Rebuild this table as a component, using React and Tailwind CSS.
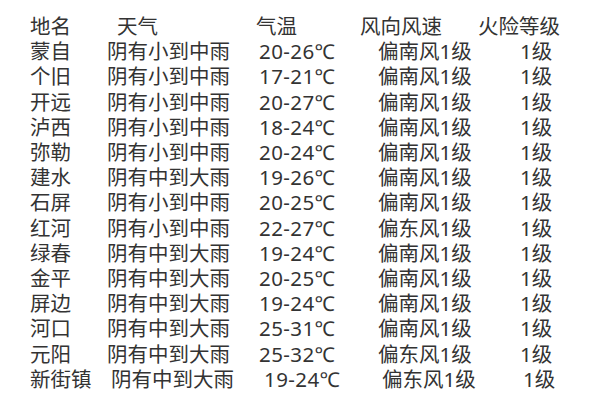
import React from 'react';

const rows = [
  ['蒙自', '阴有小到中雨', '20-26℃', '偏南风1级', '1级'],
  ['个旧', '阴有小到中雨', '17-21℃', '偏南风1级', '1级'],
  ['开远', '阴有小到中雨', '20-27℃', '偏南风1级', '1级'],
  ['泸西', '阴有小到中雨', '18-24℃', '偏南风1级', '1级'],
  ['弥勒', '阴有小到中雨', '20-24℃', '偏南风1级', '1级'],
  ['建水', '阴有中到大雨', '19-26℃', '偏南风1级', '1级'],
  ['石屏', '阴有小到中雨', '20-25℃', '偏南风1级', '1级'],
  ['红河', '阴有小到中雨', '22-27℃', '偏东风1级', '1级'],
  ['绿春', '阴有中到大雨', '19-24℃', '偏南风1级', '1级'],
  ['金平', '阴有中到大雨', '20-25℃', '偏南风1级', '1级'],
  ['屏边', '阴有中到大雨', '19-24℃', '偏南风1级', '1级'],
  ['河口', '阴有中到大雨', '25-31℃', '偏南风1级', '1级'],
  ['元阳', '阴有中到大雨', '25-32℃', '偏东风1级', '1级'],
];

const Row = ({ r }) => (
  <div className="flex">
    <div className="w-[77px]">{r[0]}</div>
    <div className="w-[152px]">{r[1]}</div>
    <div className="w-[119px] tracking-[0.4px]">{r[2]}</div>
    <div className="w-[142px]">{r[3]}</div>
    <div>{r[4]}</div>
  </div>
);

export default function App() {
  return (
    <div
      className="w-[600px] h-[410px] bg-white text-[#333] text-[20.5px] leading-[25.2px] pt-[14px] pl-[30px]"
      style={{ fontFamily: '"Noto Sans", "Noto Sans CJK SC", sans-serif' }}
    >
      {/* 表头 */}
      <div className="flex">
        <div className="w-[87px]">地名</div>
        <div className="w-[139px]">天气</div>
        <div className="w-[104px]">气温</div>
        <div className="w-[118px]">风向风速</div>
        <div>火险等级</div>
      </div>
      {rows.map((r) => (
        <Row key={r[0]} r={r} />
      ))}
      {/* 最后一行略有偏移 */}
      <div className="flex">
        <div className="w-[81px]">新街镇</div>
        <div className="w-[153px]">阴有中到大雨</div>
        <div className="w-[118px] tracking-[0.4px]">19-24℃</div>
        <div className="w-[141px]">偏东风1级</div>
        <div>1级</div>
      </div>
    </div>
  );
}
